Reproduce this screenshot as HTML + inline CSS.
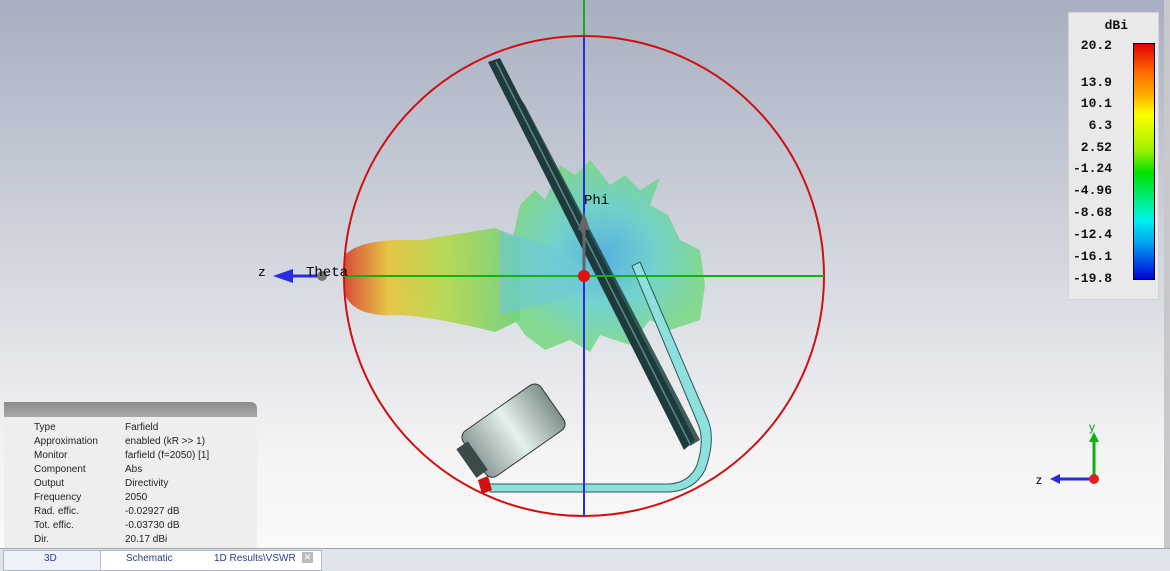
<!DOCTYPE html>
<html><head><style>
body{margin:0;width:1170px;height:570px;overflow:hidden;font-family:"Liberation Sans",sans-serif;position:relative;background:linear-gradient(#a7afc0 0%,#d2d6de 45%,#f4f4f5 80%,#fbfbfb 100%)}
.leg{position:absolute;left:1068px;top:12px;width:89px;height:286px;background:#e9e9ec;border:1px solid #d0d0d6}
.leg div{position:absolute;font-family:"Liberation Mono",monospace;font-weight:bold;font-size:13px;color:#111;right:46px;text-align:right}
.info{position:absolute;left:4px;top:402px;width:253px;height:146px;background:#eeeeee}
.info .hd{height:15px;background:linear-gradient(#8b8b8b,#a9a9a9);border-radius:0 6px 0 0}
.info table{font-size:10px;color:#222;border-collapse:collapse;margin-left:30px;margin-top:4px}
.info td{padding:0;height:14px;line-height:14px}
.tabs{position:absolute;left:0;top:548px;width:1170px;height:22px;background:#dfe3ea;border-top:1px solid #9aa;font-size:10px;color:#25408f}
.tabs span{position:absolute;top:4px}
</style></head><body>
<svg width="1170" height="570" style="position:absolute;left:0;top:0">
<defs>
<linearGradient id="lobe" x1="0" x2="1"><stop offset="0" stop-color="#d8452a"/><stop offset=".25" stop-color="#e7c43a"/><stop offset=".55" stop-color="#b8d84a"/><stop offset="1" stop-color="#6fd07a"/></linearGradient>
<radialGradient id="blob"><stop offset="0" stop-color="#3aa8e0"/><stop offset=".5" stop-color="#5ad0c8"/><stop offset="1" stop-color="#6ed87a"/></radialGradient>
<linearGradient id="cyl" x1="0" x2="1"><stop offset="0" stop-color="#8a9a96"/><stop offset=".5" stop-color="#e4f2ee"/><stop offset="1" stop-color="#7f8f8a"/></linearGradient>
</defs>
<line x1="584" y1="0" x2="584" y2="40" stroke="#12b012" stroke-width="2"/>
<path d="M345 255 Q360 238 420 240 Q470 232 495 228 L520 240 L520 320 L495 332 Q440 318 400 315 Q355 318 345 295 Z" fill="url(#lobe)" opacity=".92"/>
<path d="M520 205 L535 190 L545 200 L560 165 L575 175 L590 160 L610 185 L625 175 L640 190 L660 178 L650 205 L668 215 L680 240 L700 250 L705 285 L700 320 L670 330 L650 320 L630 345 L600 335 L590 352 L570 340 L545 350 L525 335 L515 320 L505 300 L508 260 Z" fill="url(#blob)" opacity=".8"/>
<path d="M500 230 L560 250 L600 280 L560 300 L500 315 Z" fill="#6fc8d8" opacity=".6"/>
<polygon points="500,68 525,105 700,440 690,446" fill="#1e4440" opacity=".85"/>
<polygon points="488,62 500,58 695,440 684,450" fill="#1f3a3c"/>
<line x1="496" y1="62" x2="690" y2="444" stroke="#5a8a88" stroke-width="1.5"/>
<path d="M640 262 L708 420 Q716 440 705 470 Q695 490 670 492 L490 492 L490 484 L670 484 Q690 482 697 465 Q705 440 698 424 L632 266 Z" fill="#8ee0dc" stroke="#2a5a5a" stroke-width="1"/>
<g transform="rotate(-35 510 430)"><rect x="465" y="405" width="95" height="55" rx="8" fill="url(#cyl)" stroke="#333"/><rect x="455" y="415" width="14" height="35" fill="#3a4a4a"/></g>
<polygon points="478,480 488,476 492,490 482,494" fill="#d01010"/>
<circle cx="584" cy="276" r="240" fill="none" stroke="#d01010" stroke-width="2"/>
<line x1="344" y1="276" x2="824" y2="276" stroke="#12b012" stroke-width="2"/>
<line x1="584" y1="36" x2="584" y2="516" stroke="#2a2ae0" stroke-width="2"/>
<line x1="584" y1="276" x2="584" y2="225" stroke="#666" stroke-width="3"/><polygon points="578,230 590,230 584,212" fill="#666"/>
<line x1="322" y1="276" x2="290" y2="276" stroke="#2a2ae0" stroke-width="3"/><polygon points="293,269 293,283 273,276" fill="#2a2ae0"/>
<circle cx="322" cy="276" r="5" fill="#777"/>
<circle cx="584" cy="276" r="6" fill="#e01010"/>
<text x="258" y="276" font-family="Liberation Mono" font-size="13">z</text>
<text x="306" y="276" font-family="Liberation Mono" font-size="14">Theta</text>
<text x="584" y="204" font-family="Liberation Mono" font-size="14">Phi</text>
<line x1="1094" y1="478" x2="1094" y2="440" stroke="#12b012" stroke-width="3"/><polygon points="1089,442 1099,442 1094,432" fill="#12b012"/>
<line x1="1094" y1="479" x2="1058" y2="479" stroke="#2a2ae0" stroke-width="3"/><polygon points="1060,474 1060,484 1050,479" fill="#2a2ae0"/>
<circle cx="1094" cy="479" r="5" fill="#e02020"/>
<text x="1089" y="431" font-size="12" fill="#12a012" font-family="Liberation Sans">y</text>
<text x="1036" y="484" font-size="12" font-family="Liberation Sans">z</text>
<rect x="1164" y="0" width="6" height="548" fill="#c8c8cc"/>
</svg>
<div class="leg">
<div style="top:5px;right:30px">dBi</div>
<div style="top:25px">20.2</div><div style="top:62px">13.9</div><div style="top:83px">10.1</div><div style="top:105px">6.3</div><div style="top:127px">2.52</div><div style="top:148px">-1.24</div><div style="top:170px">-4.96</div><div style="top:192px">-8.68</div><div style="top:214px">-12.4</div><div style="top:236px">-16.1</div><div style="top:258px">-19.8</div>
<span style="position:absolute;left:64px;top:30px;width:20px;height:235px;border:1px solid #000;background:linear-gradient(#e00000,#ff6a00 12%,#ffb000 22%,#ffff00 30%,#a0f000 45%,#00e000 55%,#00f0b0 70%,#00f0f0 75%,#00a0f0 85%,#0000e0)"></span>
</div>
<div class="info"><div class="hd"></div>
<table>
<tr><td style="width:91px">Type</td><td>Farfield</td></tr>
<tr><td>Approximation</td><td>enabled (kR &gt;&gt; 1)</td></tr>
<tr><td>Monitor</td><td>farfield (f=2050) [1]</td></tr>
<tr><td>Component</td><td>Abs</td></tr>
<tr><td>Output</td><td>Directivity</td></tr>
<tr><td>Frequency</td><td>2050</td></tr>
<tr><td>Rad. effic.</td><td>-0.02927 dB</td></tr>
<tr><td>Tot. effic.</td><td>-0.03730 dB</td></tr>
<tr><td>Dir.</td><td>20.17 dBi</td></tr>
</table></div>
<div class="tabs">
<div style="position:absolute;left:3px;top:1px;width:96px;height:19px;background:#eef2f8;border:1px solid #b0b8c8"></div>
<div style="position:absolute;left:100px;top:1px;width:220px;height:19px;background:#fff;border:1px solid #b0b8c8"></div>
<span style="left:44px">3D</span><span style="left:126px">Schematic</span><span style="left:214px">1D Results\VSWR</span>
<span style="left:302px;top:3px;width:11px;height:11px;background:#bbb;color:#fff;font-size:9px;text-align:center;line-height:11px">✕</span>
</div>
</body></html>
